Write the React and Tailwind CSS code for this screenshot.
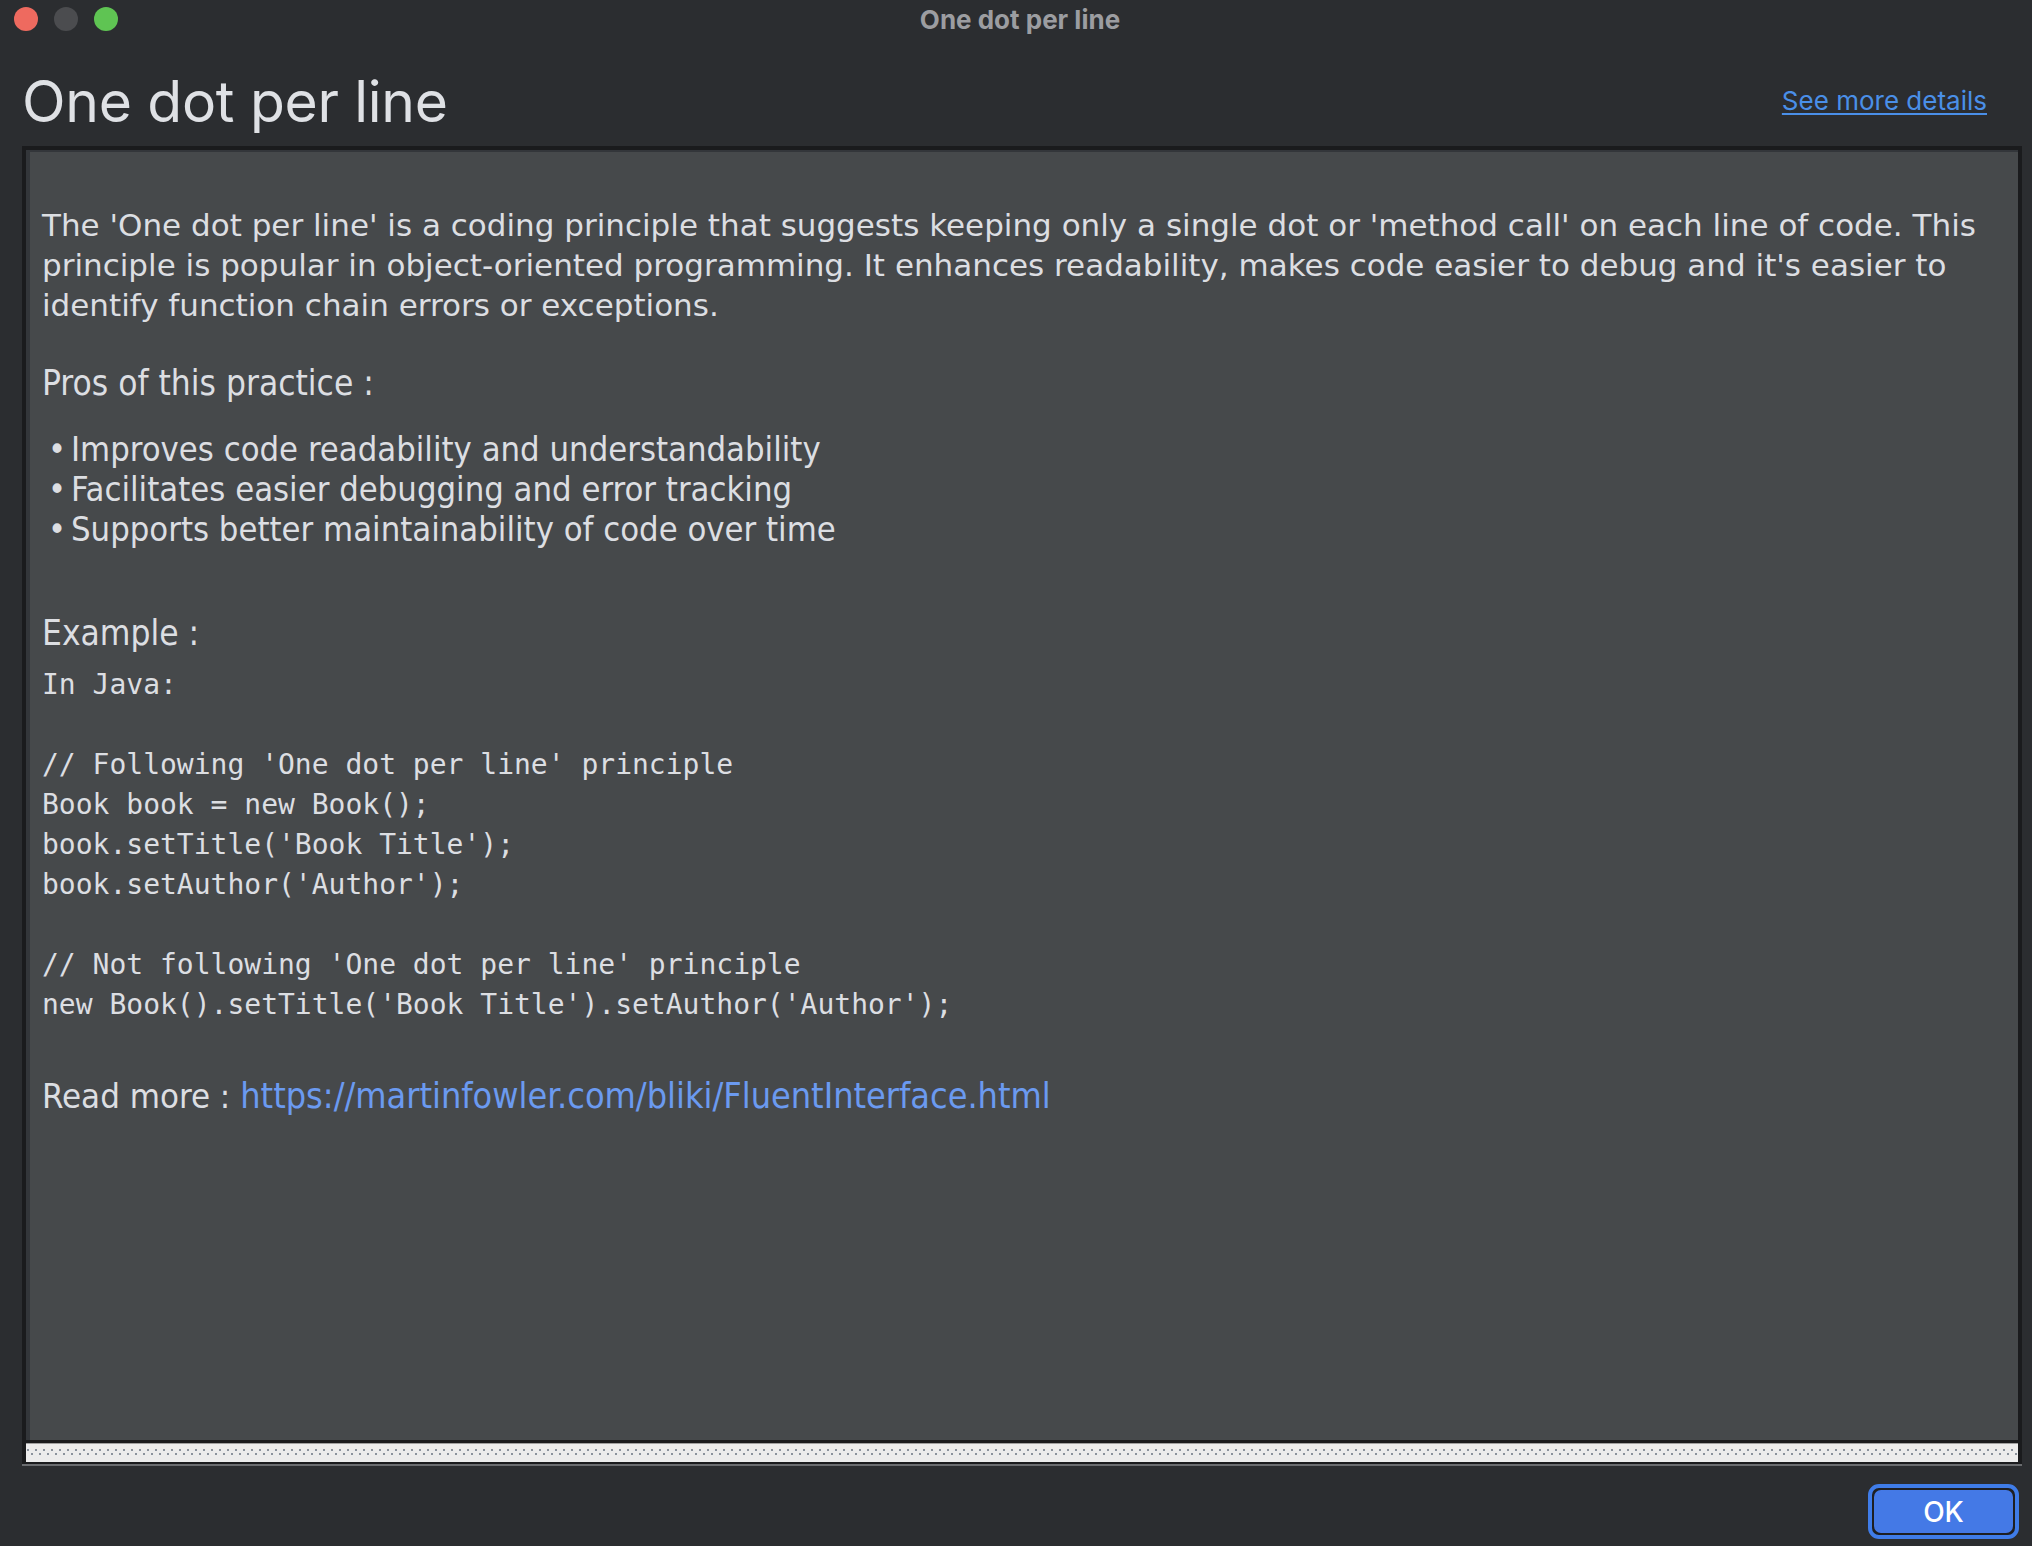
import React from 'react';

const paragraph = [
  "The 'One dot per line' is a coding principle that suggests keeping only a single dot or 'method call' on each line of code. This",
  "principle is popular in object-oriented programming. It enhances readability, makes code easier to debug and it's easier to",
  'identify function chain errors or exceptions.',
];

const pros = [
  'Improves code readability and understandability',
  'Facilitates easier debugging and error tracking',
  'Supports better maintainability of code over time',
];

const code = [
  'In Java:',
  '',
  "// Following 'One dot per line' principle",
  'Book book = new Book();',
  "book.setTitle('Book Title');",
  "book.setAuthor('Author');",
  '',
  "// Not following 'One dot per line' principle",
  "new Book().setTitle('Book Title').setAuthor('Author');",
];

const DottedStrip = () => (
  <svg width="100%" height="19" className="block">
    <defs>
      <pattern id="dots" width="8" height="19" patternUnits="userSpaceOnUse">
        <rect x="1" y="6" width="2" height="2" fill="#8a929c" />
        <rect x="5" y="10" width="2" height="2" fill="#8a929c" />
      </pattern>
    </defs>
    <rect width="100%" height="19" fill="#ececec" />
    <rect width="100%" height="1" fill="#a0a0a0" />
    <rect width="100%" height="19" fill="url(#dots)" />
  </svg>
);

const App = () => {
  return (
    <div className="w-[2032px] h-[1546px] bg-[#2b2d30] flex flex-col overflow-hidden font-['Inter',sans-serif]">
      {/* title bar */}
      <div className="relative h-[38px] flex items-center pl-[14px] gap-[16px] shrink-0">
        <span className="w-[24px] h-[24px] rounded-full bg-[#ee6a5f]" />
        <span className="w-[24px] h-[24px] rounded-full bg-[#4b4c4f]" />
        <span className="w-[24px] h-[24px] rounded-full bg-[#5fc453]" />
        <div className="absolute inset-0 flex items-center justify-center pl-[8px] text-[26px] font-bold text-[#9c9da1]">
          One dot per line
        </div>
      </div>

      {/* header */}
      <div className="h-[108px] flex justify-between items-start shrink-0">
        <h1 className="pl-[22px] pt-[35px] text-[57px] leading-[57px] font-normal tracking-[-0.3px] text-[#dfe1e5]">
          One dot per line
        </h1>
        <a href="#" className="pr-[45px] pt-[50px] text-[26px] leading-[26px] text-[#4a8fe8] underline underline-offset-[3px]">
          See more details
        </a>
      </div>

      {/* content frame */}
      <div className="ml-[22px] mr-[10px] bg-[#1a1b1d] px-[4px] pt-[4px] pb-[2px] border-b-2 border-[#6a6c6f] shrink-0">
        <div className="h-[1290px] bg-[#46494b] border-t-2 border-l-4 border-[#33363a] pl-[12px] pt-[53px] text-[#dcdee2] overflow-hidden">
          <div className="font-['DejaVu_Sans',sans-serif] text-[31px] leading-[40px]">
            {paragraph.map((line) => (
              <div key={line} className="whitespace-nowrap">{line}</div>
            ))}
          </div>

          <div className="font-['DejaVu_Sans_Condensed','DejaVu_Sans',sans-serif] font-stretch-condensed text-[35px] leading-[40px]">
            <div className="mt-[38px]">Pros of this practice :</div>
            <ul className="mt-[26px] text-[34.3px]">
              {pros.map((p) => (
                <li key={p} className="flex items-center whitespace-nowrap">
                  <span className="w-[29px] pl-[6px] text-[34px] leading-[40px]">•</span>
                  <span>{p}</span>
                </li>
              ))}
            </ul>
            <div className="mt-[64px]">Example :</div>
          </div>

          <pre className="mt-[12px] font-['DejaVu_Sans_Mono',monospace] text-[28px] leading-[40px]">
            {code.map((line, i) => (
              <div key={i} className="h-[40px]">{line}</div>
            ))}
          </pre>

          <div className="mt-[51px] font-['DejaVu_Sans_Condensed','DejaVu_Sans',sans-serif] font-stretch-condensed text-[34.5px] leading-[40px] whitespace-nowrap">
            Read more : <a href="#" className="text-[35.7px] text-[#6b9af0]">https://martinfowler.com/bliki/FluentInterface.html</a>
          </div>
        </div>
        <div className="mt-[3px]">
          <DottedStrip />
        </div>
      </div>

      {/* footer */}
      <div className="flex justify-end pr-[13px] pt-[18px]">
        <button className="w-[151px] h-[55px] rounded-[11px] border-[4px] border-[#3f7ce8] p-[2px] bg-[#1e1f22]">
          <span className="flex items-center justify-center w-full h-full rounded-[7px] bg-[#4479e6] text-white text-[28px] font-medium">
            OK
          </span>
        </button>
      </div>
    </div>
  );
};

export default App;
